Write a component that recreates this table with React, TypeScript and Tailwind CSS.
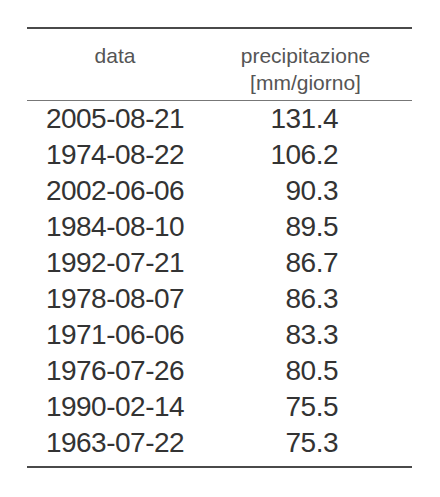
import React from "react";

const rows: [string, string][] = [
  ["2005-08-21", "131.4"],
  ["1974-08-22", "106.2"],
  ["2002-06-06", "90.3"],
  ["1984-08-10", "89.5"],
  ["1992-07-21", "86.7"],
  ["1978-08-07", "86.3"],
  ["1971-06-06", "83.3"],
  ["1976-07-26", "80.5"],
  ["1990-02-14", "75.5"],
  ["1963-07-22", "75.3"],
];

export default function App() {
  return (
    <div
      className="w-[440px] h-[497px] bg-white pt-[27px]"
      style={{ fontFamily: '"Liberation Sans", Arial, sans-serif' }}
    >
      <div className="ml-[27px] w-[385px]">
        <div className="h-[2px] bg-[#4a4a4a]" />
        <div className="grid grid-cols-[176px_209px] pt-[13px] pb-[4px] text-[21px] leading-[27px] text-[#555]">
          <div className="text-center">data</div>
          <div className="text-center pr-[4px]">
            <div>precipitazione</div>
            <div>[mm/giorno]</div>
          </div>
        </div>
        <div className="h-px bg-[#777]" />
        <div className="pb-[5px]">
          {rows.map(([d, v]) => (
            <div
              key={d}
              className="grid grid-cols-[176px_209px] h-[36px] text-[28px] leading-[36px] tracking-[-0.5px] text-[#333]"
            >
              <div className="text-center">{d}</div>
              <div className="text-right pr-[74px]">{v}</div>
            </div>
          ))}
        </div>
        <div className="h-[2px] bg-[#4a4a4a]" />
      </div>
    </div>
  );
}
